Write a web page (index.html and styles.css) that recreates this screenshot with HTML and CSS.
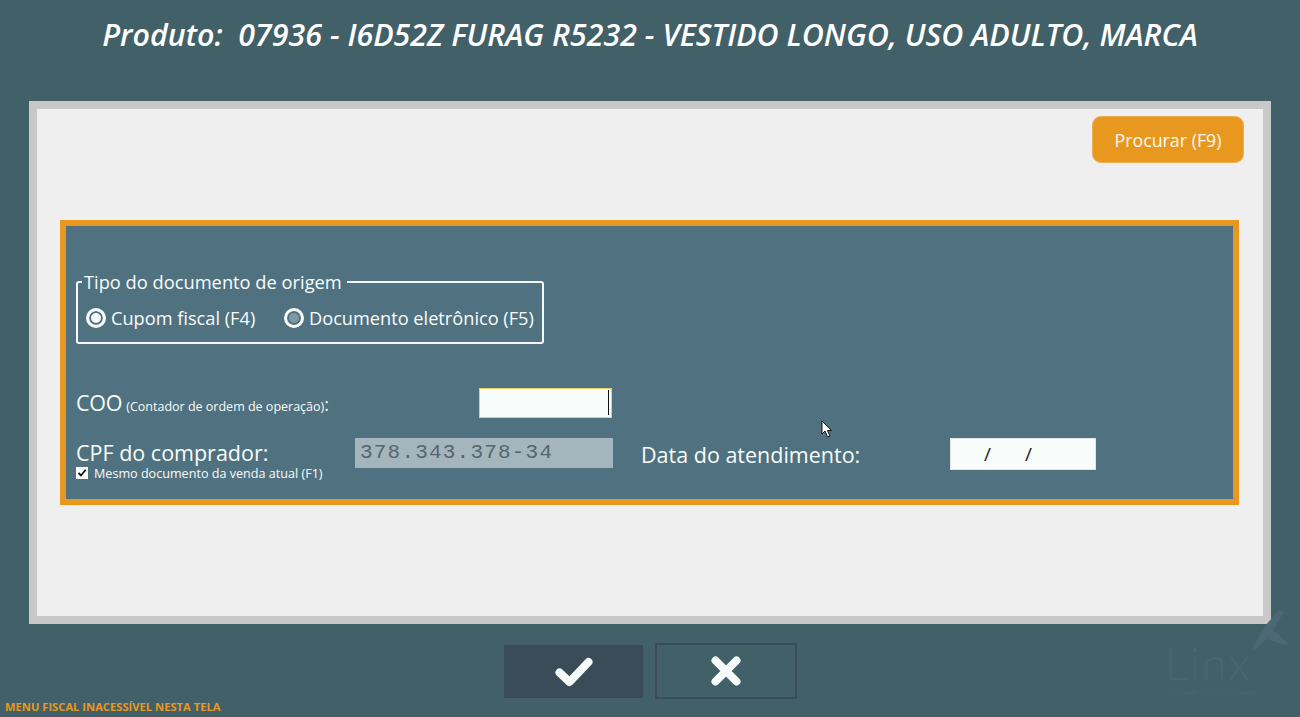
FILE: index.html
```html
<!DOCTYPE html>
<html lang="pt-br">

<head>
  <meta charset="UTF-8">
  <title>Produto</title>
  <link rel="stylesheet" href="styles.css">
</head>

<body>
  <header class="top-bar">
    <h1 class="product-title">Produto:&nbsp; 07936 - I6D52Z FURAG R5232 - VESTIDO LONGO, USO ADULTO, MARCA</h1>
  </header>

  <main class="panel">
    <div class="panel-actions">
      <button class="btn-search">Procurar (F9)</button>
    </div>

    <section class="doc-box">
      <fieldset class="doc-type">
        <legend>Tipo do documento de origem</legend>
        <div class="radio-item radio-first"><span class="radio radio-on"></span>Cupom fiscal (F4)</div>
        <div class="radio-item"><span class="radio radio-off"></span>Documento eletrônico (F5)</div>
      </fieldset>

      <div class="row-coo">
        <div class="coo-label"><span class="big">COO</span> <span class="small">(Contador de ordem de operação)</span><span class="colon">:</span></div>
        <div class="input input-coo"><span class="caret"></span></div>
      </div>

      <div class="row-cpf">
        <div class="cpf-left">
          <div class="cpf-label">CPF do comprador:</div>
          <div class="same-doc">
            <span class="checkbox">
              <svg viewBox="0 0 10 10" width="10" height="10">
                <path d="M1.5 5 L4 7.5 L8.7 1.8" fill="none" stroke="#111" stroke-width="1.8" />
              </svg>
            </span>
            Mesmo documento da venda atual (F1)
          </div>
        </div>
        <div class="input input-cpf">378.343.378-34</div>
        <div class="date-label">Data do atendimento:</div>
        <div class="input input-date"><span>/</span><span>/</span></div>
      </div>
    </section>
  </main>

  <footer class="bottom">
    <button class="btn-action btn-ok">
      <svg viewBox="0 0 38 30" width="38" height="30">
        <path d="M4.500 15.500 L14.500 25 L33.500 5" fill="none" stroke="#f8fcfa" stroke-width="8" stroke-linecap="round" stroke-linejoin="round" />
      </svg>
    </button>
    <button class="btn-action btn-cancel">
      <svg viewBox="0 0 30 30" width="30" height="30">
        <path d="M4.500 4.500 L25.500 25.500 M25.500 4.500 L4.500 25.500" fill="none" stroke="#f8fcfa" stroke-width="8" stroke-linecap="round" />
      </svg>
    </button>
  </footer>

  <div class="status-text">MENU FISCAL INACESSÍVEL NESTA TELA</div>

  <div class="linx-logo">
    <svg class="linx-mark" viewBox="0 0 36 41" width="36" height="41">
      <path d="M26 0 L31 2 L20 20 L35 33 L34 36 L14 29 L1 40 L0 37 L13 15 Z" fill="#4b6874" />
    </svg>
    <div class="linx-name">Linx</div>
    <div class="linx-tag">SOFTWARE QUE MOVE O VAREJO</div>
  </div>

  <svg class="mouse-cursor" viewBox="0 0 12 18" width="12" height="18">
    <path d="M1 1 L1 14 L4 11 L6.500 17 L9 16 L6.500 10.500 L10.500 10.500 Z" fill="#fff" stroke="#111" stroke-width="1" />
  </svg>
</body>

</html>
```
FILE: styles.css
```css
* {
  margin: 0;
  padding: 0;
  box-sizing: border-box;
}

html,
body {
  height: 717px;
  overflow: hidden;
}

body {
  position: relative;
  background-color: #426068;
  color: #f8fcfa;
  font-family: "Open Sans", "Noto Sans", sans-serif;
}

.top-bar {
  height: 101px;
  padding-top: 15px;
  text-align: center;
}

.product-title {
  font-size: 30.4px;
  line-height: 40px;
  font-weight: 600;
  font-style: italic;
  color: #fff;
  white-space: nowrap;
}

.panel {
  height: 523px;
  margin: 0 29px;
  padding: 7px 19px 0 23px;
  background-color: #efefef;
  border: 8px solid #c8c8c8;
}

.panel-actions {
  display: flex;
  justify-content: flex-end;
}

.btn-search {
  width: 152px;
  height: 47px;
  background-color: #e8981f;
  color: #f8f8f0;
  border: 1px solid #eeae52;
  border-radius: 9px;
  font-family: inherit;
  font-size: 17.8px;
}

.doc-box {
  width: 1179px;
  height: 285px;
  margin-top: 57px;
  padding: 0 10px;
  background-color: #507280;
  border: 6px solid #e8981f;
}

.doc-type {
  display: flex;
  align-items: center;
  width: 468px;
  height: 73px;
  margin-top: 45px;
  padding: 0 0 0 8px;
  border: 2px solid #f4f8f8;
  border-radius: 3px;
}

.doc-type legend {
  margin-left: -4px;
  padding: 0 5px 0 2px;
  font-size: 18.3px;
  line-height: 22px;
}

.radio-item {
  display: flex;
  align-items: center;
  gap: 5px;
  font-size: 18.2px;
  white-space: nowrap;
  margin-top: 0;
}

.radio-first {
  width: 198px;
}

.radio {
  width: 20px;
  height: 20px;
  border-radius: 50%;
  border: 3px solid #f8fcfa;
  flex-shrink: 0;
}

.radio-on {
  background-color: #f8fcfa;
  box-shadow: inset 0 0 0 2px #507280;
}

.radio-off {
  background-color: #7f99a3;
  box-shadow: inset 0 0 0 2px #507280;
}

.row-coo {
  display: flex;
  align-items: center;
  justify-content: space-between;
  width: 536px;
  height: 29px;
  margin-top: 44px;
}

.coo-label {
  white-space: nowrap;
}

.coo-label .big {
  font-size: 21.5px;
  letter-spacing: -0.3px;
}

.coo-label .small {
  font-size: 12.5px;
}

.coo-label .colon {
  font-size: 18px;
}

.input {
  background-color: #f8fcfa;
}

.input-coo {
  display: flex;
  justify-content: flex-end;
  align-items: center;
  width: 133px;
  height: 30px;
  padding-right: 2px;
  border: 1px solid #e9cf66;
}

.caret {
  width: 1px;
  height: 25px;
  background-color: #111;
}

.row-cpf {
  display: flex;
  align-items: flex-start;
  margin-top: 21px;
}

.cpf-left {
  width: 279px;
}

.cpf-label {
  font-size: 21.5px;
  line-height: 29px;
}

.same-doc {
  display: flex;
  align-items: center;
  gap: 6px;
  height: 14px;
  margin-top: -1px;
  font-size: 12.6px;
  white-space: nowrap;
}

.checkbox {
  display: flex;
  width: 12px;
  height: 12px;
  background-color: #f8fcfa;
  align-items: center;
  justify-content: center;
}

.input-cpf {
  width: 258px;
  height: 30px;
  padding-left: 5px;
  background-color: #a5b5bd;
  color: #55666e;
  font-family: "Liberation Mono", monospace;
  font-size: 21px;
  line-height: 30px;
  letter-spacing: 1.2px;
}

.date-label {
  width: 337px;
  padding-left: 28px;
  font-size: 21.5px;
  line-height: 33px;
}

.input-date {
  display: flex;
  gap: 34px;
  width: 146px;
  height: 32px;
  padding-left: 33px;
  border: 1px solid #dfe6e6;
  color: #222;
  font-size: 19px;
  line-height: 31px;
}

.bottom {
  display: flex;
  justify-content: center;
  align-items: flex-start;
  gap: 12px;
  height: 93px;
  padding-top: 19px;
  padding-left: 1px;
}

.btn-action {
  display: flex;
  align-items: center;
  justify-content: center;
  background: none;
  border: none;
}

.btn-ok {
  width: 139px;
  height: 53px;
  margin-top: 2px;
  background-color: #3a4c58;
}

.btn-cancel {
  width: 142px;
  height: 56px;
  border: 2px solid #3a4c58;
}

.status-text {
  position: absolute;
  left: 5px;
  bottom: 3px;
  color: #e8981f;
  font-size: 11.2px;
  line-height: 15px;
  font-weight: 700;
}

/* faded logo over the corner */
.linx-logo {
  position: absolute;
  left: 1160px;
  top: 606px;
  width: 135px;
  height: 92px;
  color: #4a6570;
}

.linx-mark {
  position: absolute;
  left: 93px;
  top: 4px;
}

.linx-name {
  position: absolute;
  left: 5px;
  top: 32px;
  font-family: "Lato", sans-serif;
  font-weight: 300;
  font-size: 45px;
  line-height: 50px;
  letter-spacing: 2px;
}

.linx-tag {
  position: absolute;
  left: 7px;
  top: 83px;
  font-size: 6px;
  line-height: 8px;
  white-space: nowrap;
}

.mouse-cursor {
  position: absolute;
  left: 821px;
  top: 420px;
}
```
